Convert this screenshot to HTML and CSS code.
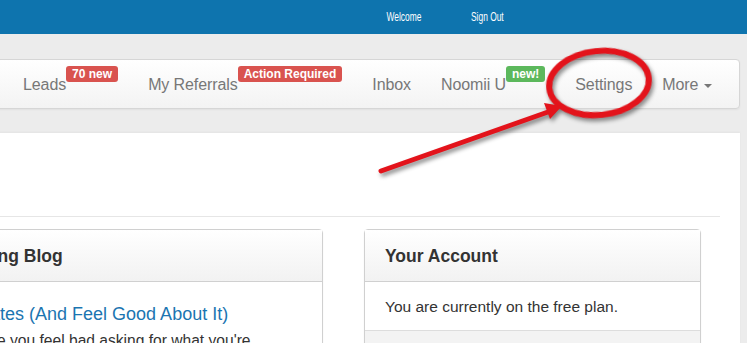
FILE: index.html
```html
<!DOCTYPE html>
<html lang="en">
<head>
    <meta charset="UTF-8">
    <meta name="viewport" content="width=device-width, initial-scale=1.0">
    <title>Noomii - Dashboard</title>
    <link rel="stylesheet" href="styles.css">
</head>
<body>
    <div class="topbar">
        <a class="top-link" href="#">Welcome</a>
        <a class="top-link" href="#">Sign Out</a>
    </div>

    <div class="wrap">
        <nav class="navbar">
            <ul class="nav">
                <li><a href="#"><span>Leads</span><span class="badge red">70 new</span></a></li>
                <li><a href="#"><span>My Referrals</span><span class="badge red">Action Required</span></a></li>
                <li><a href="#"><span>Inbox</span></a></li>
                <li><a href="#"><span>Noomii U</span><span class="badge green">new!</span></a></li>
                <li><a href="#"><span>Settings</span></a></li>
                <li><a href="#"><span>More</span><b class="caret"></b></a></li>
            </ul>
        </nav>

        <div class="content">
            <div class="page-header"></div>
            <div class="panels">
                <div class="panel">
                    <div class="panel-heading">Learning Blog</div>
                    <div class="panel-body blog">
                        <a class="post-title" href="#">Set Rates (And Feel Good About It)</a>
                        <p>Because you feel bad asking for what you're charging clients.</p>
                    </div>
                </div>
                <div class="panel">
                    <div class="panel-heading">Your Account</div>
                    <div class="panel-body">You are currently on the free plan.</div>
                    <div class="panel-footer"></div>
                </div>
            </div>
        </div>
    </div>

    <!-- annotation drawn over the screenshot -->
    <svg class="markup" width="747" height="343" viewBox="0 0 747 343">
        <g class="ink">
            <ellipse cx="599" cy="83" rx="50" ry="32" transform="rotate(-6 599 83)" fill="none" stroke="#e3131b" stroke-width="6"/>
            <line x1="381" y1="171" x2="548" y2="112" stroke="#e3131b" stroke-width="5" stroke-linecap="round"/>
            <polygon points="562,106 550,119 544,103" fill="#e3131b"/>
        </g>
    </svg>
</body>
</html>
```

FILE: styles.css
```css
body {
    margin: 0;
    background-color: #ececec;
    font-family: "Liberation Sans", Arial, sans-serif;
    color: #333;
    overflow: hidden;
}

a {
    text-decoration: none;
}

.topbar {
    display: flex;
    justify-content: flex-end;
    align-items: center;
    height: 34px;
    padding-right: 218px;
    background-color: #0e74ae;
}

.top-link {
    display: inline-block;
    padding: 0 18px;
    color: #fff;
    font-size: 12px;
    transform: scaleX(0.7); /* the original font is a condensed one */
}

.wrap {
    margin: 25px 7px 0 -96px;
}

.navbar {
    height: 48px;
    border: 1px solid #d6d6d6;
    border-radius: 4px;
    background: linear-gradient(#fff, #f3f3f3);
    box-shadow: 0 1px 2px rgba(0, 0, 0, 0.05);
}

.nav {
    display: flex;
    margin: 0;
    padding: 0 0 0 103px;
    list-style: none;
}

.nav a {
    display: flex;
    align-items: flex-start;
    padding: 15px 15px 13px;
    color: #777;
    font-size: 16px;
    line-height: 20px;
    letter-spacing: -0.1px;
}

.badge {
    margin-top: -9px;
    padding: 0 6px;
    border-radius: 3px;
    color: #fff;
    font-size: 12px;
    font-weight: bold;
    line-height: 16px;
    letter-spacing: 0;
}

.badge.red {
    background-color: #d9534f;
}

.badge.green {
    background-color: #5cb85c;
}

.caret {
    align-self: center;
    margin-left: 6px;
    margin-top: 2px;
    border-top: 4px solid #777;
    border-left: 4px solid transparent;
    border-right: 4px solid transparent;
}

.content {
    margin-top: 24px;
    padding: 0 20px;
    height: 240px;
    background-color: #fff;
    box-shadow: 0 -1px 2px rgba(0, 0, 0, 0.04);
}

.page-header {
    height: 83px;
    border-bottom: 1px solid #e6e6e6;
}

.panels {
    display: grid;
    grid-template-columns: 1fr 337px;
    column-gap: 41px;
    margin-top: 12px;
    padding-right: 19px;
}

.panel {
    border: 1px solid #d0d0d0;
    border-radius: 4px;
    background-color: #fff;
    box-shadow: 0 1px 2px rgba(0, 0, 0, 0.06);
}

.panel-heading {
    padding: 15px 20px 14px;
    border-bottom: 1px solid #d0d0d0;
    background: linear-gradient(#fff, #f2f2f2);
    font-size: 17.5px;
    font-weight: bold;
    line-height: 22px;
    color: #333;
}

.panel-body {
    padding: 15px 20px 13px;
    border-bottom: 1px solid #ddd;
    font-size: 15.5px;
    line-height: 20px;
}

.panel-body.blog {
    padding-top: 20px;
    border-bottom: none;
}

.post-title {
    display: block;
    color: #1b75b1;
    font-size: 18px;
    line-height: 24px;
}

.blog p {
    margin: 5px 0 0;
    font-size: 15.6px;
    line-height: 20px;
}

.panel-footer {
    height: 40px;
    background-color: #f3f3f3;
}

.markup {
    position: absolute;
    top: 0;
    left: 0;
    pointer-events: none;
}

.ink {
    filter: drop-shadow(2px 3px 2px rgba(0, 0, 0, 0.45));
}
```
